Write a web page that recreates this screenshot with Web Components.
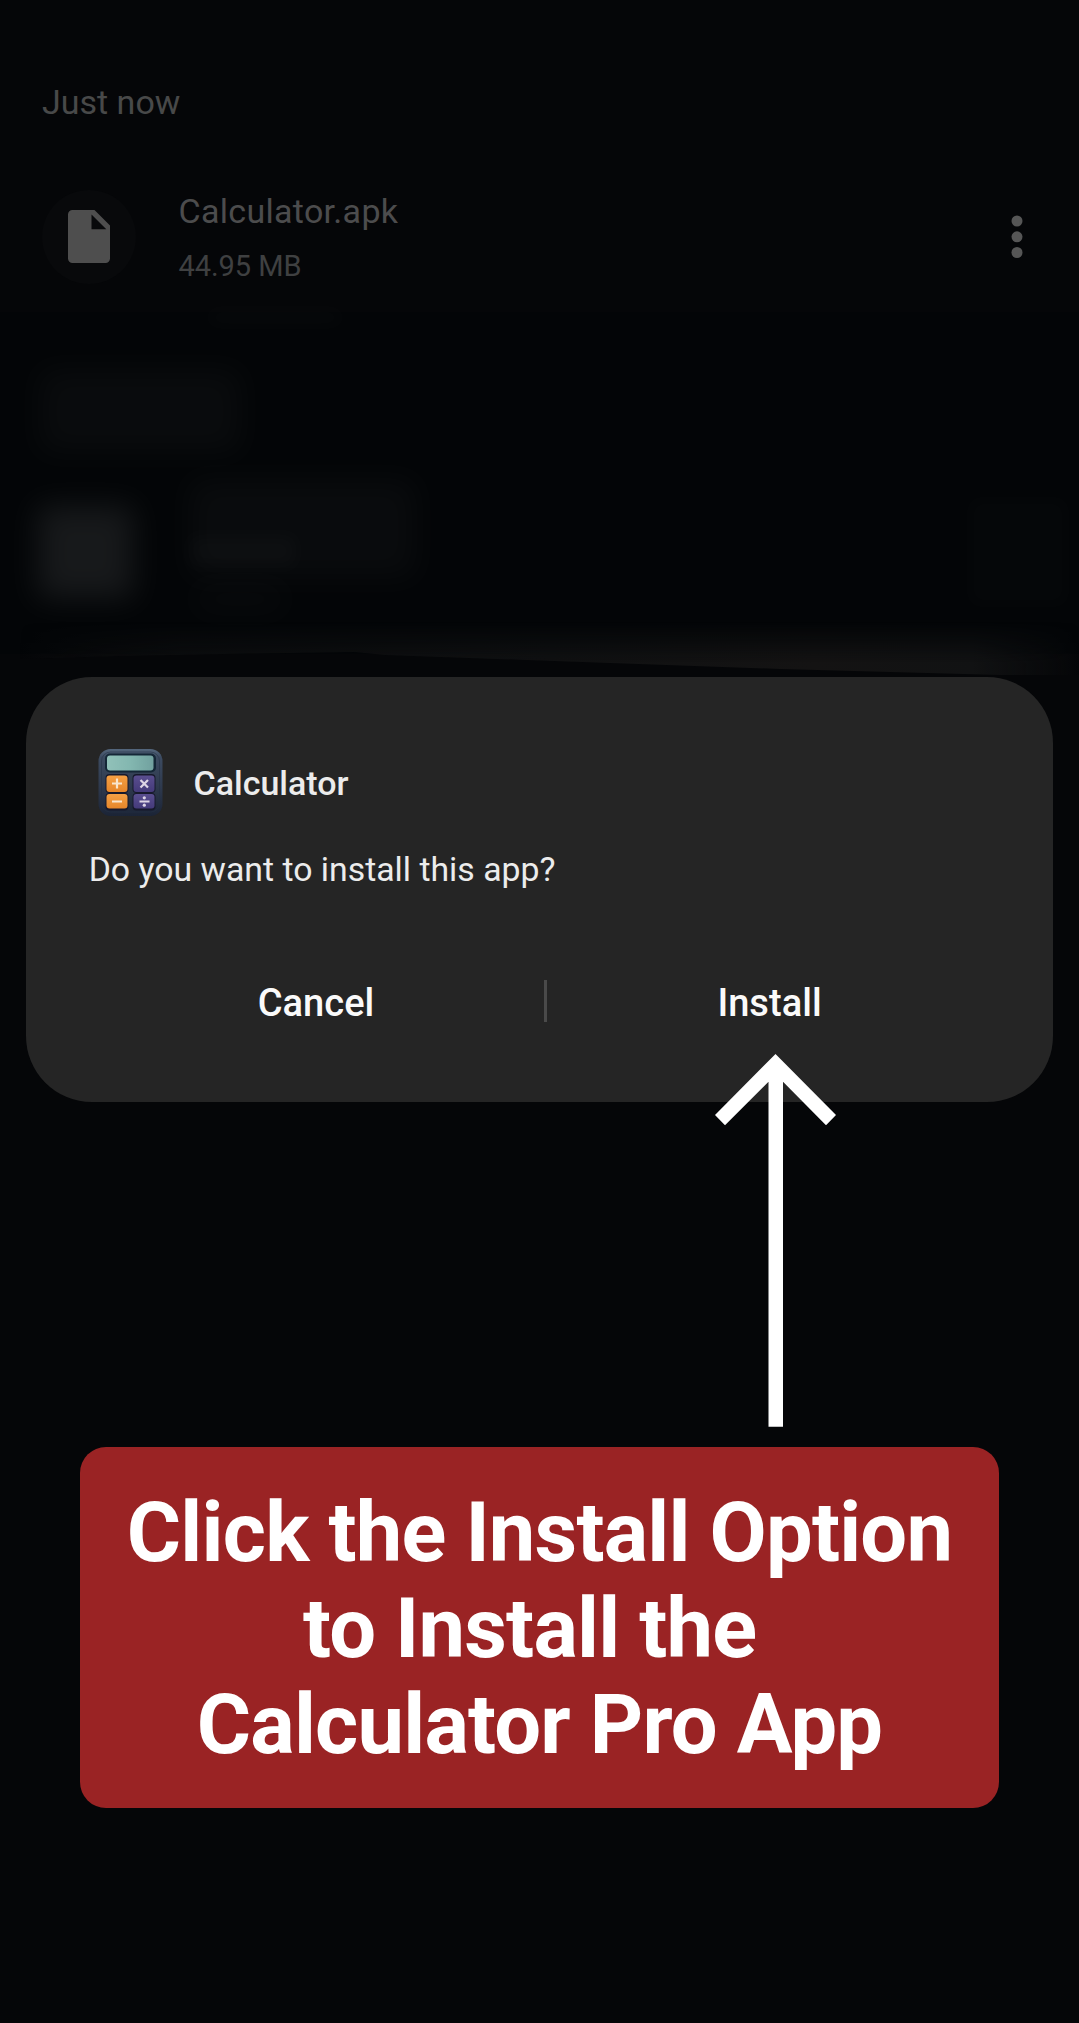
<!DOCTYPE html>
<html lang="en">
<head>
<meta charset="utf-8">
<title>Install Calculator</title>
<style>
html,body{margin:0;background:#050608}
body{width:1079px;height:2023px;overflow:hidden;font-family:Roboto,"Liberation Sans",sans-serif}
</style>
</head>
<body>
<install-screen></install-screen>
<script>
const define=(name,html)=>customElements.define(name,class extends HTMLElement{
  constructor(){super();this.attachShadow({mode:'open'}).innerHTML=html}
});

define('file-icon',`<style>:host{display:block;width:94px;height:94px}svg{display:block}</style>
<svg width="94" height="94" viewBox="0 0 94 94"><circle cx="47" cy="47" r="47" fill="#08090b"/>
<path fill="#4e4e4e" fill-rule="evenodd" d="M30.5 20H52.5L68 35.500V68.500a4.500 4.500 0 0 1-4.500 4.500H30.500a4.500 4.500 0 0 1-4.500-4.500V24.500a4.500 4.500 0 0 1 4.500-4.500ZM49.500 24.500V39.300H64.300Z"/></svg>`);

define('more-dots',`<style>:host{display:block}svg{display:block}</style><svg width="12" height="44" viewBox="0 0 12 44" fill="#565656"><circle cx="6" cy="6" r="5.500"/><circle cx="6" cy="21.800" r="5.500"/><circle cx="6" cy="37.500" r="5.500"/></svg>`);

define('file-row',`<style>
:host{display:flex;align-items:center;height:94px;padding:0 56px 0 42px}
.t{flex:1;margin-left:42.500px;padding-top:2px;display:flex;flex-direction:column;gap:15px;line-height:40px}
.n{font-size:34px;color:#4c4c4d;letter-spacing:.3px}
.s{font-size:29px;color:#3f4041;letter-spacing:-.05px}
</style><file-icon></file-icon><div class="t"><div class="n"><slot name="name"></slot></div><div class="s"><slot name="size"></slot></div></div><more-dots></more-dots>`);

define('blurred-files',`<style>:host{display:block;height:377px}svg{display:block}</style>
<svg width="1079" height="377" viewBox="0 0 1079 377" color-interpolation-filters="sRGB">
<defs><filter id="b" x="-50%" y="-60%" width="200%" height="220%"><feGaussianBlur stdDeviation="15"/></filter>
<filter id="c" x="-50%" y="-100%" width="200%" height="300%"><feGaussianBlur stdDeviation="8"/></filter>
<linearGradient id="v" x2="0" y2="1"><stop stop-color="#fff" stop-opacity="0"/><stop offset=".75" stop-color="#fff"/></linearGradient>
<linearGradient id="h"><stop stop-color="#131313" stop-opacity="0"/><stop offset=".15" stop-color="#101112" stop-opacity=".7"/><stop offset=".5" stop-color="#101112"/><stop offset=".75" stop-color="#141313"/><stop offset=".9" stop-color="#111213"/><stop offset="1" stop-color="#111213" stop-opacity="0"/></linearGradient>
<mask id="m"><rect y="322" width="1079" height="55" fill="url(#v)"/></mask></defs>
<rect y="12" width="1079" height="342" fill="#030507"/>
<g fill="#fff">
<rect x="210" y="13" width="130" height="9" filter="url(#c)" opacity=".018"/>
<rect x="40" y="70" width="200" height="82" filter="url(#b)" opacity=".024"/>
<rect x="190" y="180" width="225" height="97" filter="url(#b)" opacity=".024"/>
<rect x="190" y="236" width="105" height="30" filter="url(#c)" opacity=".017"/>
<rect x="195" y="285" width="90" height="28" filter="url(#b)" opacity=".014"/>
<rect x="970" y="200" width="96" height="104" filter="url(#c)" opacity=".008"/>
<rect x="38" y="206" width="95" height="92" filter="url(#b)" opacity=".078"/>
</g>
<g mask="url(#m)"><path d="M20 320V359L120 356 250 353.500 355 352 385 355 540 360.500 780 369 1000 375H1079V320Z" fill="url(#h)"/></g>
</svg>`);

define('calculator-icon',`<style>:host{display:block;width:66px;height:68px}svg{display:block}</style>
<svg width="66" height="68" viewBox="0 0 66 68">
<defs><linearGradient id="a" x2="0" y2="1"><stop stop-color="#54677d"/><stop offset=".12" stop-color="#3c4b61"/><stop offset=".6" stop-color="#2d384c"/><stop offset="1" stop-color="#1b2436"/></linearGradient>
<linearGradient id="s"><stop stop-color="#91c1b9"/><stop offset=".5" stop-color="#83b7b0"/><stop offset="1" stop-color="#71a19f"/></linearGradient>
<linearGradient id="o" x2="0" y2="1"><stop stop-color="#f5a044"/><stop offset="1" stop-color="#e6862a"/></linearGradient>
<linearGradient id="p" x2="0" y2="1"><stop stop-color="#5a4e8f"/><stop offset="1" stop-color="#443a7a"/></linearGradient>
<filter id="f" color-interpolation-filters="sRGB"><feGaussianBlur stdDeviation=".6"/></filter></defs>
<g filter="url(#f)">
<rect x=".5" y="1" width="64" height="67" rx="12" fill="url(#a)"/><rect x="3.500" y="4" width="58" height="60" rx="9" fill="none" stroke="#253146" stroke-opacity=".55"/>
<rect x="7" y="5.500" width="51" height="19" rx="5" fill="#142737"/><rect x="9" y="7.500" width="46.500" height="15" rx="3" fill="url(#s)"/>
<g fill="#17192c"><rect x="7.500" y="26" width="23" height="19" rx="4"/><rect x="34.500" y="26" width="23" height="19" rx="4"/><rect x="7.500" y="45" width="23" height="17.500" rx="4"/><rect x="34.500" y="45" width="23" height="17.500" rx="4"/></g>
<g fill="url(#o)"><rect x="8.500" y="27.500" width="21" height="16.500" rx="3"/><rect x="8.500" y="46" width="21" height="14.500" rx="3"/></g>
<g fill="url(#p)"><rect x="35.500" y="27.500" width="21" height="16.500" rx="3"/><rect x="35.500" y="46" width="21" height="14.500" rx="3"/></g>
<g stroke="#f8e5cd" stroke-width="2.200" fill="none"><path d="M14 35.500h10M19 30.500v10M14 53.500h10"/><path stroke="#ddd5e5" d="M42.500 32l7.500 7.500M50 32l-7.500 7.500M41.500 53.500h10"/></g>
<g fill="#ddd5e5"><circle cx="46.300" cy="49.800" r="1.600"/><circle cx="46.300" cy="57.200" r="1.600"/></g></g></svg>`);

define('install-dialog',`<style>
:host{display:flex;flex-direction:column;box-sizing:border-box;width:1027px;height:425px;margin-left:26px;border-radius:66px;background:#252525;padding:71px 62px 0;color:#ececec}
.h{display:flex;height:68px;padding-left:10px;align-items:flex-start}
.t{margin:15px 0 0 29.500px;font:500 34px/40px Roboto,sans-serif}
.q{margin-top:34px;font-size:33.800px;line-height:40px;height:40px;padding-left:.7px}
.b{display:flex;align-items:flex-start;margin-top:90px;font-weight:500;font-size:38.100px;line-height:46px;color:#fafafa}
.b>div{width:456px;text-align:center;flex:none}.b>i{width:3px;height:42px;background:#4a4a4a;flex:none}
.b>div:last-child{width:445px}
</style><div class="h"><calculator-icon></calculator-icon><div class="t"><slot name="title"></slot></div></div>
<div class="q"><slot></slot></div><div class="b"><div><slot name="cancel"></slot></div><i></i><div><slot name="confirm"></slot></div></div>`);

define('pointer-arrow',`<style>:host{display:block;position:absolute;left:714px;top:1053px}svg{display:block}</style>
<svg width="123" height="374" viewBox="714 1053 123 374"><path fill="#fff" d="M775.500 1054 836 1115 826 1125.300 783 1081.700V1426.700H768.500V1081.700L725 1125.300 715 1115Z"/></svg>`);

define('callout-banner',`<style>:host{display:block;box-sizing:border-box;width:919px;height:361px;margin:345px 0 0 80px;border-radius:26px;background:#9a2324;padding-top:38px;text-align:center;color:#fff;font-weight:700;font-size:83px;line-height:96px;letter-spacing:-.79px;white-space:pre}</style><slot></slot>`);

define('install-screen',`<style>
:host{display:flex;flex-direction:column;position:relative;width:1079px;height:2023px;background:#050608}
.when{padding:82px 0 68px 42px;font-size:34px;line-height:40px;color:#484949}
file-row{margin-bottom:16px}
</style><div class="when">Just now</div>
<file-row><span slot="name">Calculator.apk</span><span slot="size">44.95 MB</span></file-row>
<blurred-files></blurred-files>
<install-dialog><span slot="title">Calculator</span>Do you want to install this app?<span slot="cancel">Cancel</span><span slot="confirm">Install</span></install-dialog>
<callout-banner><div>Click the Install Option</div><div>to Install the&nbsp;</div><div>Calculator Pro App</div></callout-banner>
<pointer-arrow></pointer-arrow>`);
</script>
</body>
</html>
